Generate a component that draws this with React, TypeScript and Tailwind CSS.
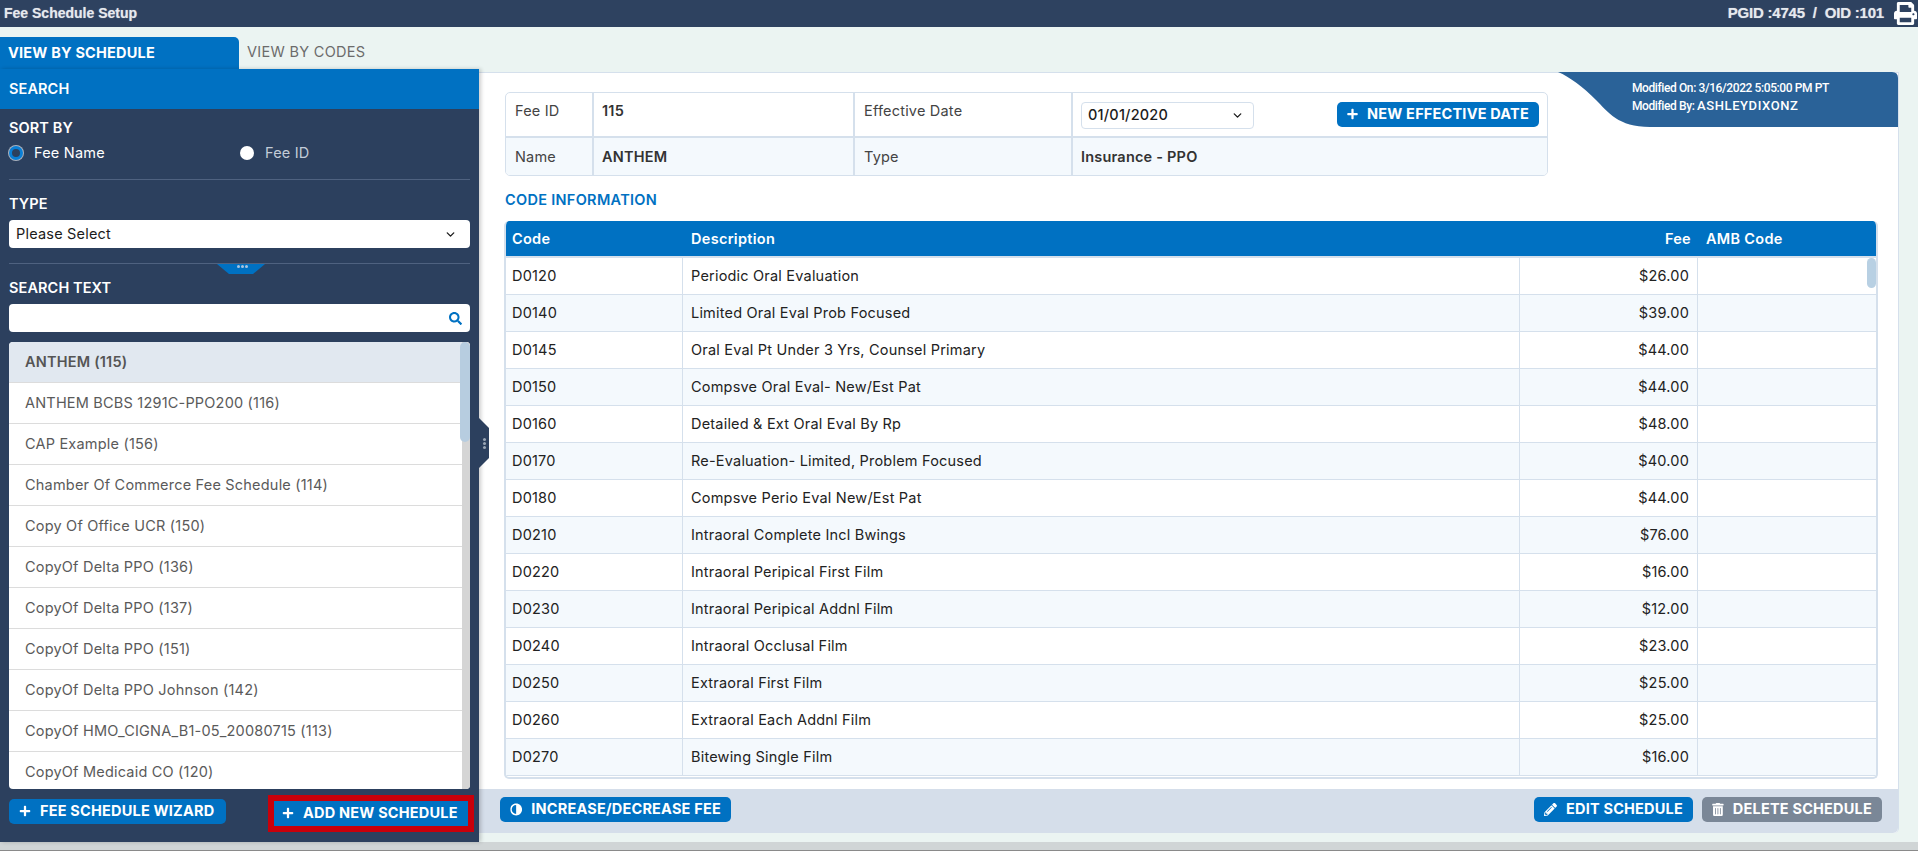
import React from 'react';
import { ChevronDown } from 'lucide-react';
import { FaAdjust, FaPencilAlt, FaPlus, FaPrint, FaSearch, FaTrashAlt } from 'react-icons/fa';

const schedules = [
  'ANTHEM (115)',
  'ANTHEM BCBS 1291C-PPO200 (116)',
  'CAP Example (156)',
  'Chamber Of Commerce Fee Schedule (114)',
  'Copy Of Office UCR (150)',
  'CopyOf Delta PPO (136)',
  'CopyOf Delta PPO (137)',
  'CopyOf Delta PPO (151)',
  'CopyOf Delta PPO Johnson (142)',
  'CopyOf HMO_CIGNA_B1-05_20080715 (113)',
  'CopyOf Medicaid CO (120)',
];

const codes = [
  ['D0120', 'Periodic Oral Evaluation', '$26.00'],
  ['D0140', 'Limited Oral Eval Prob Focused', '$39.00'],
  ['D0145', 'Oral Eval Pt Under 3 Yrs, Counsel Primary', '$44.00'],
  ['D0150', 'Compsve Oral Eval- New/Est Pat', '$44.00'],
  ['D0160', 'Detailed & Ext Oral Eval By Rp', '$48.00'],
  ['D0170', 'Re-Evaluation- Limited, Problem Focused', '$40.00'],
  ['D0180', 'Compsve Perio Eval New/Est Pat', '$44.00'],
  ['D0210', 'Intraoral Complete Incl Bwings', '$76.00'],
  ['D0220', 'Intraoral Peripical First Film', '$16.00'],
  ['D0230', 'Intraoral Peripical Addnl Film', '$12.00'],
  ['D0240', 'Intraoral Occlusal Film', '$23.00'],
  ['D0250', 'Extraoral First Film', '$25.00'],
  ['D0260', 'Extraoral Each Addnl Film', '$25.00'],
  ['D0270', 'Bitewing Single Film', '$16.00'],
];

// Montserrat isn't installed, Inter with a bit of tracking gets close to its widths
const bodyText = 'text-[14.5px] tracking-[0.2px]';
const headText = 'text-[14.5px] leading-4 font-semibold tracking-[0.1px]';

const Btn = ({
  icon,
  label,
  className = '',
}: {
  icon: React.ReactNode;
  label: string;
  className?: string;
}) => (
  <button className={`flex h-[25px] items-center gap-[9px] rounded-[5px] px-[10px] pb-px text-[14.5px] font-bold tracking-[0.2px] whitespace-nowrap text-white ${className}`}>
    {icon}
    {label}
  </button>
);

const Sidebar = () => (
  <div className="relative z-10 flex w-[479px] shrink-0 flex-col bg-[#2c405e] shadow-[2px_0_4px_rgba(0,0,0,0.2)]">
    <div className={`flex h-10 items-center bg-[#0071c2] px-[9px] text-white ${headText}`}>SEARCH</div>
    <div className="px-[9px]">
      <div className={`mt-[11px] text-white ${headText}`}>SORT BY</div>
      <div className="mt-[9px] flex h-4 items-center">
        <span className="h-[14px] w-[14px] rounded-full border-[3px] border-[#0a7fd6] bg-[#2c405e] ring-1 ring-white/60" />
        <span className={`ml-[11px] w-[206px] text-white ${bodyText}`}>Fee Name</span>
        <span className="h-[14px] w-[14px] rounded-full bg-white" />
        <span className={`ml-[11px] text-[#c3ccd8] ${bodyText}`}>Fee ID</span>
      </div>
      <div className="mt-[18px] border-t border-[#4f6280]" />
      <div className={`mt-4 text-white ${headText}`}>TYPE</div>
      <div className={`mt-2 flex h-7 items-center justify-between rounded-[4px] bg-white pr-[13px] pl-[7px] text-[#1c1c1c] ${bodyText}`}>
        Please Select
        <ChevronDown className="h-[13px] w-[13px]" strokeWidth={2.5} />
      </div>
      <div className="relative mt-[15px] border-t border-[#4f6280]">
        <div className="absolute top-0 left-[208px] h-[10px] w-12 bg-[#0071c2] [clip-path:polygon(0_0,100%_0,75%_100%,25%_100%)]" />
        <div className="absolute top-[1px] left-[228px] flex gap-[1px]">
          <span className="h-[3px] w-[3px] rounded-full bg-[#a9c4de]" />
          <span className="h-[3px] w-[3px] rounded-full bg-[#a9c4de]" />
          <span className="h-[3px] w-[3px] rounded-full bg-[#a9c4de]" />
        </div>
      </div>
      <div className={`mt-4 text-white ${headText}`}>SEARCH TEXT</div>
      <div className="mt-2 flex h-7 items-center justify-end rounded-[4px] bg-white pr-[8px]">
        <FaSearch className="h-[13px] w-[13px] text-[#0071c2]" />
      </div>
    </div>
    <div className="relative mx-[9px] mt-[10px] h-[447px] overflow-hidden rounded-[4px] bg-white">
      {schedules.map((name, i) => (
        <div
          key={name}
          className={`flex h-[41px] items-center border-b border-[#dcdcdc] pl-4 ${bodyText} ${
            i === 0 ? 'bg-[#e1e8f0] font-semibold text-[#555]' : 'text-[#5a5a5a]'
          }`}
        >
          {name}
        </div>
      ))}
      <div className="absolute top-0 right-0 h-full w-[8px] bg-[#d5d5d5]" />
      <div className="absolute top-0 right-0 h-[100px] w-[10px] rounded-[5px] bg-[#b7cde0]" />
    </div>
    <div className="mx-[9px] mt-[6px] flex items-start justify-between">
      <Btn icon={<FaPlus className="h-[12px] w-[12px]" />} label="FEE SCHEDULE WIZARD" className="mt-[4px] w-[217px] bg-[#0071c2]" />
      <div className="mr-[-4px] border-[6px] border-[#c8000a]">
        <Btn icon={<FaPlus className="h-[12px] w-[12px]" />} label="ADD NEW SCHEDULE" className="h-[22px] w-[194px] !rounded-none bg-[#0071c2] !px-[8px]" />
      </div>
    </div>
    {/* collapse handle */}
    <div className="absolute top-[349px] -right-[10px] flex h-[50px] w-[10px] flex-col items-center justify-center gap-[1px] bg-[#2c405e] [clip-path:polygon(0_0,100%_20%,100%_80%,0_100%)]">
      <span className="h-[3px] w-[3px] rounded-full bg-[#9aa6b5]" />
      <span className="h-[3px] w-[3px] rounded-full bg-[#9aa6b5]" />
      <span className="h-[3px] w-[3px] rounded-full bg-[#9aa6b5]" />
    </div>
  </div>
);

const infoLabel = `px-[9px] text-[#444] ${bodyText}`;
const infoValue = `px-[8px] font-semibold text-[#333] ${bodyText}`;

const InfoTable = () => (
  <div className="ml-[26px] h-[84px] w-[1043px] overflow-hidden rounded-[5px] border border-[#d5e0ec]">
    <div className="grid h-[45px] grid-cols-[88px_261px_218px_1fr] border-b-2 border-[#d5e0ec]">
      <div className={`${infoLabel} border-r-2 border-[#d5e0ec] pt-[7px]`}>Fee ID</div>
      <div className={`${infoValue} border-r-2 border-[#d5e0ec] pt-[7px]`}>115</div>
      <div className={`${infoLabel} border-r-2 border-[#d5e0ec] pt-[7px]`}>Effective Date</div>
      <div className="flex items-center justify-between pr-[8px] pl-[8px]">
        <div className={`mt-[1px] flex h-[27px] w-[173px] items-center justify-between rounded-[4px] border border-[#d5e0ec] pr-[9px] pl-[6px] font-medium text-[#1c1c1c] ${bodyText}`}>
          01/01/2020
          <ChevronDown className="h-[13px] w-[13px]" strokeWidth={2.5} />
        </div>
        <Btn icon={<FaPlus className="h-[12px] w-[12px]" />} label="NEW EFFECTIVE DATE" className="w-[202px] bg-[#0071c2]" />
      </div>
    </div>
    <div className="grid h-[37px] grid-cols-[88px_261px_218px_1fr] items-stretch bg-[#f4f9fd]">
      <div className={`${infoLabel} flex items-center border-r-2 border-[#d5e0ec]`}>Name</div>
      <div className={`${infoValue} flex items-center border-r-2 border-[#d5e0ec]`}>ANTHEM</div>
      <div className={`${infoLabel} flex items-center border-r-2 border-[#d5e0ec]`}>Type</div>
      <div className={`${infoValue} flex items-center`}>Insurance - PPO</div>
    </div>
  </div>
);

const CodeTable = () => (
  <div className="relative mt-[13px] mr-[20px] ml-[25px] h-[558px] overflow-hidden rounded-[5px] border-x-2 border-b-2 border-[#d5e0ec]">
    <div className="-mx-[2px] grid h-[35px] grid-cols-[179px_837px_178px_1fr] items-center rounded-t-[5px] bg-[#0071c2] text-[14.5px] font-semibold tracking-[0.3px] text-white">
      <span className="pl-[8px]">Code</span>
      <span className="pl-[8px]">Description</span>
      <span className="pr-[7px] text-right">Fee</span>
      <span className="pl-[8px]">AMB Code</span>
    </div>
    <div className="border-t-2 border-[#d5e0ec]">
      {codes.map(([code, desc, fee], i) => (
        <div
          key={code}
          className={`-ml-[2px] grid h-[37px] grid-cols-[179px_837px_178px_1fr] items-stretch border-b border-[#d5e0ec] text-[#222] ${bodyText} ${
            i % 2 ? 'bg-[#f4f9fd]' : 'bg-white'
          }`}
        >
          <span className="flex items-center border-r border-[#d5e0ec] pl-[8px]">{code}</span>
          <span className="flex items-center border-r border-[#d5e0ec] pl-[8px]">{desc}</span>
          <span className="flex items-center justify-end border-r border-[#d5e0ec] pr-[8px]">{fee}</span>
          <span />
        </div>
      ))}
    </div>
    <div className="absolute top-[37px] right-0 h-[30px] w-[9px] rounded-[5px] bg-[#b8d0e3]" />
  </div>
);

export default function App() {
  return (
    <div className="h-[851px] w-[1918px] overflow-hidden bg-[#ebf4f2] font-['Inter',sans-serif]">
      <div className="flex h-[27px] items-center justify-between bg-[#2e4260] pr-[1px] pl-[4px] font-['Liberation_Sans',sans-serif] text-[14px] font-bold text-[#e6e9ee] [text-shadow:0_0_1px_rgba(255,255,255,0.5)]">
        <span>Fee Schedule Setup</span>
        <div className="flex items-center gap-[10px]">
          <span className="text-[15px] tracking-[-0.2px]">PGID :4745&nbsp; /&nbsp; OID :101</span>
          <FaPrint className="h-[23px] w-[23px] text-white" />
        </div>
      </div>
      <div className="flex h-[42px] items-end">
        <div className="flex h-8 w-[239px] items-center rounded-tr-[5px] bg-[#0071c2] pl-2 text-[14.5px] font-bold tracking-[0.2px] text-white">
          VIEW BY SCHEDULE
        </div>
        <div className="flex h-8 items-center pb-[2px] pl-2 text-[14.5px] tracking-[0.3px] text-[#6b6b6b]">VIEW BY CODES</div>
      </div>
      <div className="flex h-[773px]">
        <Sidebar />
        <div className="mt-[3px] mr-[19px] mb-[9px] flex flex-1 flex-col rounded-br-[5px] border-t border-r border-[#d5e0ec] bg-white">
          <div className="relative flex-1 pt-[19px]">
            <svg className="absolute top-[-1px] right-0 h-[55px] w-[340px]" viewBox="0 0 340 55" aria-hidden>
              <path d="M0 0H334Q340 0 340 6V55H92C60 55 50 40 38 28C25 15 12 5 0 0Z" fill="#2a6298" />
            </svg>
            <div className="absolute top-[7px] left-[1153px] font-['Roboto',sans-serif] text-[12px] leading-[17px] font-medium tracking-[-0.4px] text-white">
              <div>Modified On: 3/16/2022 5:05:00 PM PT</div>
              <div>
                Modified By: <span className="text-[13px] tracking-[0.6px]">ASHLEYDIXONZ</span>
              </div>
            </div>
            <InfoTable />
            <div className="mt-[16px] ml-[26px] text-[14.5px] leading-4 font-semibold tracking-[0.3px] text-[#0071c2]">CODE INFORMATION</div>
            <CodeTable />
          </div>
          <div className="flex h-[44px] items-start justify-between rounded-br-[5px] bg-[#d5deea] pt-2 pr-[16px] pl-[21px]">
            <Btn icon={<FaAdjust className="h-[13px] w-[13px] -scale-x-100" />} label="INCREASE/DECREASE FEE" className="w-[231px] bg-[#0071c2]" />
            <div className="flex gap-[9px]">
              <Btn icon={<FaPencilAlt className="h-[13px] w-[13px]" />} label="EDIT SCHEDULE" className="w-[159px] bg-[#0071c2]" />
              <Btn icon={<FaTrashAlt className="h-[13px] w-[13px]" />} label="DELETE SCHEDULE" className="w-[180px] bg-[#7a8797]" />
            </div>
          </div>
        </div>
      </div>
      <div className="h-[9px] border-b border-[#8a8a8a] bg-[#d0d5d6]" />
    </div>
  );
}
